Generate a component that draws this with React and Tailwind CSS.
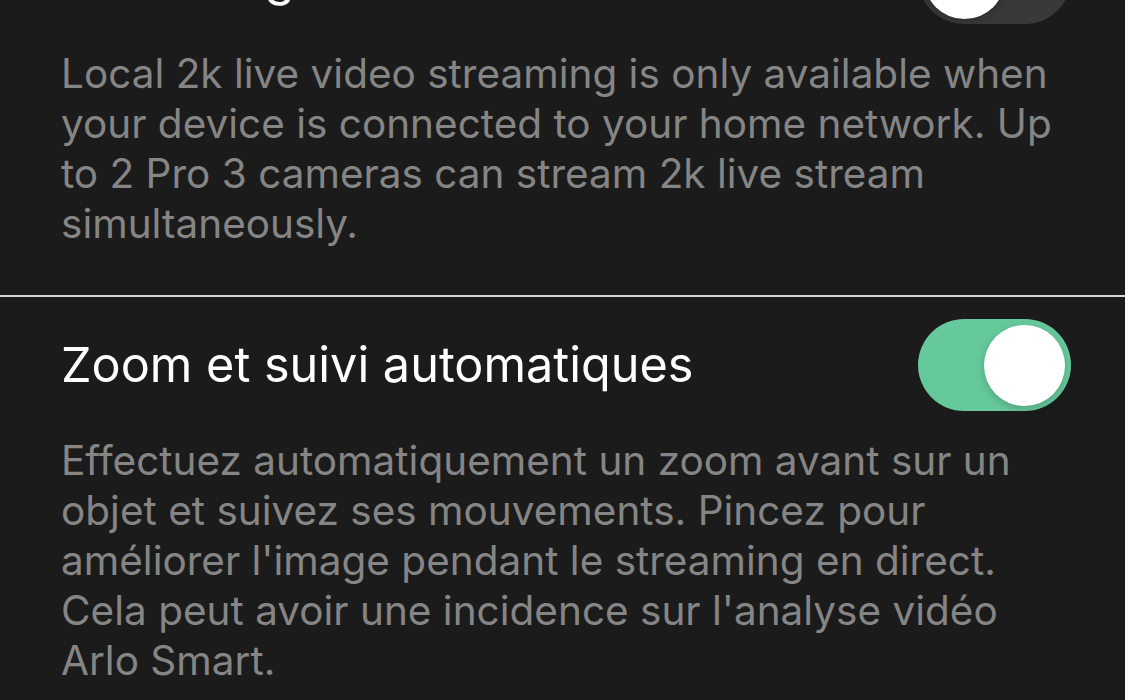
const font = { fontFamily: 'Inter, "Noto Sans", sans-serif' };

function Toggle({ on }) {
  return (
    <div
      className={`flex h-[92px] w-[153px] shrink-0 items-center rounded-full px-[6px] ${
        on ? "justify-end bg-[#66c99b]" : "justify-start bg-[#39393c]"
      }`}
    >
      <div className="h-[81px] w-[81px] rounded-full bg-white shadow-[0_3px_8px_rgba(0,0,0,0.2)]" />
    </div>
  );
}

function Setting({ title, on, children, className }) {
  return (
    <section className={className}>
      <div className="flex items-center justify-between pl-[61px] pr-[54px]">
        <h2 className="text-[48.6px] leading-[92px] text-white">{title}</h2>
        <Toggle on={on} />
      </div>
      <p className="mt-[25px] pl-[61px] pr-[54px] text-[40.5px] leading-[50px] text-[#858585]">
        {children}
      </p>
    </section>
  );
}

export default function App() {
  return (
    <div className="h-[700px] w-[1125px] overflow-hidden bg-[#1b1b1b]" style={font}>
      <Setting title="Streaming" on={false} className="-mt-[68px] pb-[46px]">
        Local 2k live video streaming is only available when your device is connected to your
        home network. Up to 2 Pro 3 cameras can stream 2k live stream simultaneously.
      </Setting>
      <div className="h-[2px] bg-[#d6d6d6]" />
      <Setting title="Zoom et suivi automatiques" on className="pt-[22px]">
        Effectuez automatiquement un zoom avant sur un objet et suivez ses mouvements. Pincez pour
        améliorer l'image pendant le streaming en direct. Cela peut avoir une incidence sur
        l'analyse vidéo Arlo Smart.
      </Setting>
    </div>
  );
}
